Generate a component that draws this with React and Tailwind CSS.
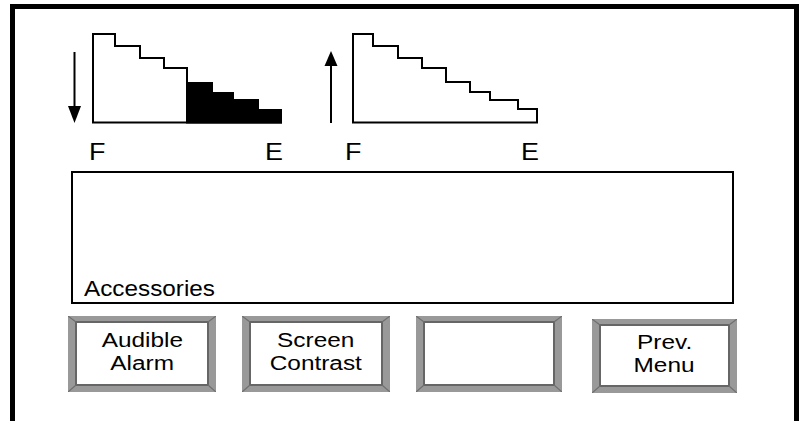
import React from "react";

const font = "font-['Liberation_Sans',Arial,Helvetica,sans-serif]";

// bevelled soft key
const SoftKey = ({ lines, w, h, className }) => (
    <div className={`relative bg-[#999] pt-[5px] px-[7px] pb-[6px] ${className}`}>
        <div className="h-full border-2 border-[#666] bg-white flex flex-col items-center justify-center pb-[3px] text-[20px] leading-[23px]">
            {lines.map((l, i) => (
                <span key={i} className="inline-block scale-x-[1.22]">{l}</span>
            ))}
        </div>
        <svg className="absolute left-0 top-0" width={w} height={h}>
            <g stroke="#6f6f6f" strokeWidth="1.2">
                <line x1="0" y1="0" x2="8" y2="6" />
                <line x1={w} y1="0" x2={w - 8} y2="6" />
                <line x1="0" y1={h} x2="8" y2={h - 7} />
                <line x1={w} y1={h} x2={w - 8} y2={h - 7} />
            </g>
        </svg>
    </div>
);

const App = () => {
    return (
        <div className={`w-[799px] h-[421px] overflow-hidden bg-white text-black pt-[4px] pl-[10px] ${font}`}>
            <div className="w-[789px] h-[417px] border-x-[5px] border-t-[5px] border-black">
                {/* tank level graphs */}
                <div className="flex pt-[22px]">
                    <div className="ml-[51px] flex flex-col">
                        <svg width="218" height="94" viewBox="66 31 218 94">
                            <line x1="74.5" y1="52" x2="74.5" y2="108" stroke="#000" strokeWidth="2" />
                            <polygon points="68,106 81,106 74.5,123" fill="#000" />
                            <polygon points="186,82 213,82 213,92 234,92 234,99 259,99 259,109 282,109 282,123.5 186,123.5" fill="#000" />
                            <path d="M93 122.5 V34 H115 V46 H140 V58 H164 V68 H187 V122.5 M92 122.5 H282" fill="none" stroke="#000" strokeWidth="2" />
                        </svg>
                        <div className="mt-[15px] flex justify-between pl-[23px] pr-[1px] text-[24px] leading-[24px]">
                            <span className="inline-block origin-left scale-x-[1.12]">F</span>
                            <span className="inline-block origin-right scale-x-[1.12]">E</span>
                        </div>
                    </div>
                    <div className="ml-[36px] flex flex-col">
                        <svg width="220" height="94" viewBox="320 31 220 94">
                            <line x1="331" y1="64" x2="331" y2="123" stroke="#000" strokeWidth="2" />
                            <polygon points="324.5,66 337.5,66 331,51" fill="#000" />
                            <path d="M353 122.5 V34 H373 V46 H398 V58 H422 V68 H446 V82 H470 V92 H490 V100 H518 V109 H537 V122.5 Z" fill="none" stroke="#000" strokeWidth="2" />
                        </svg>
                        <div className="mt-[15px] flex justify-between pl-[25px] pr-[1px] text-[24px] leading-[24px]">
                            <span className="inline-block origin-left scale-x-[1.12]">F</span>
                            <span className="inline-block origin-right scale-x-[1.12]">E</span>
                        </div>
                    </div>
                </div>

                {/* message area */}
                <div className="mt-[7px] ml-[56px] w-[663px] h-[133px] border-2 border-black flex items-end pl-[11px] pb-[2px]">
                    <span className="inline-block origin-left scale-x-[1.13] text-[21.5px] leading-[22px]">Accessories</span>
                </div>

                {/* soft keys */}
                <div className="mt-[12px] ml-[53px] flex items-start">
                    <SoftKey lines={["Audible", "Alarm"]} w={148} h={76} className="w-[148px] h-[76px]" />
                    <SoftKey lines={["Screen", "Contrast"]} w={148} h={76} className="ml-[26px] w-[148px] h-[76px]" />
                    <SoftKey lines={[]} w={146} h={76} className="ml-[26px] w-[146px] h-[76px]" />
                    <SoftKey lines={["Prev.", "Menu"]} w={145} h={74} className="ml-[30px] mt-[3px] w-[145px] h-[74px]" />
                </div>
            </div>
        </div>
    );
};

export default App;
